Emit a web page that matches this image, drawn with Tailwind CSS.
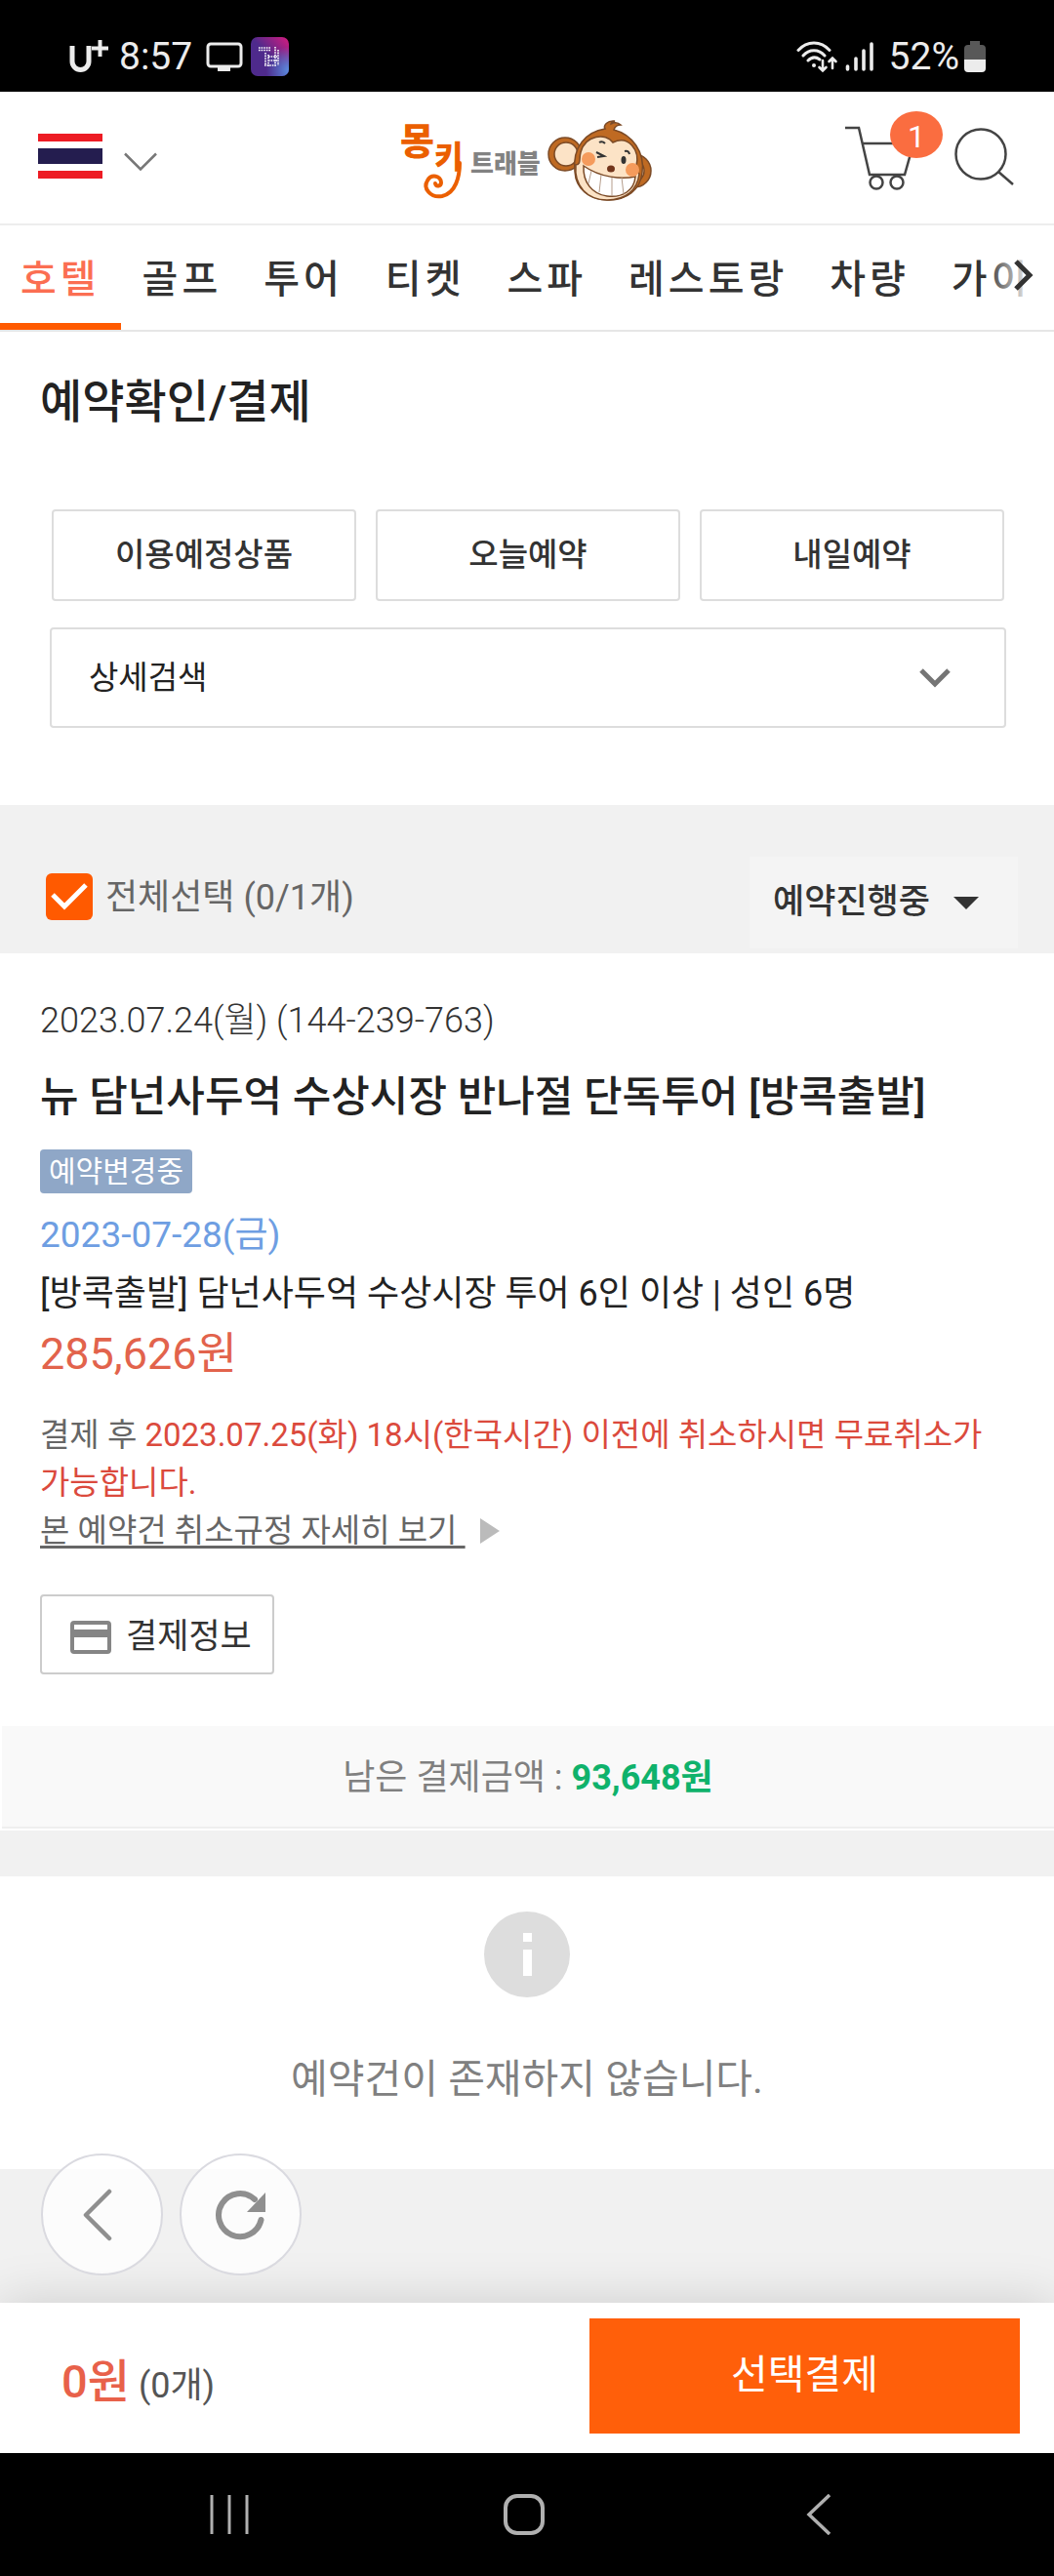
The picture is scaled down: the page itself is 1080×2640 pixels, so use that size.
<!DOCTYPE html>
<html lang="ko">
<head>
<meta charset="utf-8">
<meta name="viewport" content="width=device-width, initial-scale=1">
<title>예약확인/결제 - 몽키트래블</title>
<script src="https://cdn.jsdelivr.net/npm/@tailwindcss/browser@4"></script>
</head>
<body class="flex min-h-screen flex-col overflow-x-hidden bg-[#f1f1f1] font-['Roboto','Noto_Sans_CJK_KR',sans-serif] text-[#222]">

<!-- Phone status bar -->
<div class="flex h-[94px] shrink-0 items-start justify-between bg-black pt-[38px] pr-[70px] pl-[70px] text-[#ececec]">
  <div class="flex h-10 items-center">
    <svg class="mr-[10px] h-[36px] w-[42px]" viewBox="0 0 42 36" fill="none" stroke="#ececec"><path stroke-width="5" d="M4 7v16a8.500 8.500 0 0 0 17 0V7"/><path stroke-width="4" d="M24 9.500h17M32.500 1v17"/></svg>
    <span class="text-[39px] leading-[42px]">8:57</span>
    <svg class="ml-[14px] h-[32px] w-[38px]" viewBox="0 0 38 32" fill="none" stroke="#ececec"><rect x="2" y="3" width="34" height="23" rx="3" stroke-width="3"/><path stroke="none" fill="#ececec" d="M12 26h13v5H12z"/></svg>
    <svg class="ml-[8px] size-10" viewBox="0 0 40 40"><defs><linearGradient id="app" x1="0" y1="1" x2="1" y2="0"><stop offset=".5" stop-color="#4e2a8c"/><stop offset="1" stop-color="#d81b80"/></linearGradient><radialGradient id="glow" cx="1" cy=".85" r=".6"><stop offset="0" stop-color="#5a8de0"/><stop offset="1" stop-color="#5a8de0" stop-opacity="0"/></radialGradient></defs><rect width="39" height="40" rx="7" fill="url(#app)"/><rect width="39" height="40" rx="7" fill="url(#glow)"/><path d="M8 11h12M8 13.500h12M15 16v12M18 18v12M25 10v20M28 13v16M18 20h9M18 24h9M14 29h12" stroke="#fff" stroke-width="1.600" stroke-dasharray="1.600 1" fill="none"/></svg>
  </div>
  <div class="flex h-10 items-center">
    <svg class="h-[34px] w-[44px]" viewBox="0 0 44 34" fill="none" stroke="#ececec" stroke-width="3" stroke-linecap="round"><path d="M2 10.500c9-10 23-10 32 0M7 16c6-7 16-7 22 0M12 21c4-4 8-4 12-1"/><circle cx="18" cy="26" r="2" fill="#ececec" stroke="none"/><path stroke-width="2.600" d="M27 21v10M23.500 28l3.500 3.500L30.500 28M37 29V19M33.500 22l3.500-3.500L40.500 22"/></svg>
    <svg class="ml-[6px] h-[32px] w-[30px]" viewBox="0 0 30 32" stroke="#ececec" stroke-width="3.600" stroke-linecap="round"><path d="M2.500 26v3M11 18v11M19 10v19M27 3v26"/></svg>
    <span class="ml-[15px] text-[39px] leading-[42px]">52%</span>
    <svg class="ml-[5px] h-[34px] w-[22px]" viewBox="0 0 22 34"><path d="M6 1h10v4h2a4 4 0 0 1 4 4v11H0V9a4 4 0 0 1 4-4h2z" fill="#585858"/><path d="M0 20h22v9a4 4 0 0 1-4 4H4a4 4 0 0 1-4-4z" fill="#ececec"/></svg>
  </div>
</div>

<!-- Site header -->
<header class="shrink-0 bg-white">
  <div class="grid h-[137px] grid-cols-[1fr_auto_1fr] items-center border-b-2 border-[#ededed]">
    <button class="mb-[4px] flex items-center justify-self-start pl-[39px]" aria-label="국가 선택">
      <svg class="h-[46px] w-[66px]" viewBox="0 0 66 46"><path fill="#ed1c24" d="M0 0h66v8H0zM0 38h66v8H0z"/><path fill="#241d4f" d="M0 15h66v16H0z"/></svg>
      <svg class="mt-[12px] ml-[22px] h-[20px] w-[34px]" viewBox="0 0 34 20" fill="none" stroke="#777" stroke-width="2.500"><path d="M1 1.500l16 16 16-16"/></svg>
    </button>
    <a href="#" class="flex h-full items-center" aria-label="몽키트래블">
      <svg class="h-[114px] w-[260px] pb-[4px] font-['Noto_Sans_CJK_KR',sans-serif] font-black" viewBox="0 0 260 110">
        <text x="0" y="53" font-size="38" fill="#eb5f00">몽</text>
        <text x="35" y="67" font-size="32" fill="#eb5f00">키</text>
        <path d="M61 62c0 14-4 31-18 34-12 2-20-8-15-16 4-7 14-5 14 2 0 4-5 5-6 1" fill="none" stroke="#eb5f00" stroke-width="4" stroke-linecap="round"/>
        <text x="72" y="72" font-size="26" fill="#828282">트래블</text>
        <g stroke="#7b4a26" stroke-width="1.500">
          <circle cx="169" cy="53" r="17" fill="#bf6a22"/><circle cx="170" cy="53" r="12" fill="#fce3c6"/>
          <circle cx="240" cy="70" r="17" fill="#bf6a22"/><circle cx="238" cy="70" r="12" fill="#fce3c6"/>
          <path d="M210 27c-2-3 2-9 10-8-3 1-4 2-4 3 4-2 8-1 10 1-4 0-6 2-7 5 19 5 32 23 29 44-2 18-16 28-34 28-20 0-34-11-35-29-3-26 12-41 31-44z" fill="#bf6a22"/>
          <path d="M218 41c-7-10-28-8-33 10-2 7 1 12-5 13-2 22 12 36 32 36 19 0 31-10 33-27-3-2-4-3-3-8 4-16-8-32-24-24z" fill="#fce3c6"/>
          <path d="M188 65c17 12 39 14 53 11-1 14-13 22-29 20-15-2-25-14-24-31z" fill="#fff"/>
        </g>
        <path d="M196 70l-3 13M206 74l-2 18M217 77v19M227 77l2 17" stroke="#b59d8b" fill="none"/>
        <circle cx="193" cy="58" r="7" fill="#f59b5c"/><circle cx="238" cy="69" r="7" fill="#f59b5c"/>
        <ellipse cx="216" cy="68" rx="4" ry="3.500" fill="#72351b"/>
        <path d="M201 51l8 4-7 1M204 41q3-2 6 1M230 50q4-1 5 3" stroke="#333" stroke-width="2" fill="none"/><ellipse cx="229" cy="59" rx="2.500" ry="4" fill="#333"/>
      </svg>
    </a>
    <div class="mb-[4px] flex items-center justify-self-end pr-[41px]">
      <button class="relative" aria-label="장바구니 1">
        <svg class="h-[70px] w-[72px]" viewBox="0 0 72 70" fill="none" stroke="#444" stroke-width="2.500"><path d="M0 6h14l11 48h36l9-32H18"/><circle cx="32" cy="62" r="6.500"/><circle cx="53" cy="62" r="6.500"/></svg>
        <span class="absolute -top-[11px] left-[46px] flex h-[48px] w-[54px] items-center justify-center rounded-[50%] bg-[#fa6d40] pt-1 text-[32px] leading-none text-white">1</span>
      </button>
      <button class="ml-[39px]" aria-label="검색">
        <svg class="h-[60px] w-[62px]" viewBox="0 0 62 60" fill="none" stroke="#444" stroke-width="2.500"><circle cx="28" cy="28" r="25.500"/><path d="M46 46l15 13"/></svg>
      </button>
    </div>
  </div>
  <div class="relative">
    <nav class="flex h-[109px] gap-px overflow-hidden border-b-2 border-[#e6e6e6] text-[40px] leading-[102px] font-medium tracking-[4px] whitespace-nowrap text-[#333]">
      <a href="#" class="border-b-[7px] border-[#ff5a00] px-[21px] pt-[5px] text-[#fb6e52]">호텔</a>
      <a href="#" class="px-[21px] pt-[5px]">골프</a>
      <a href="#" class="px-[21px] pt-[5px]">투어</a>
      <a href="#" class="px-[21px] pt-[5px]">티켓</a>
      <a href="#" class="px-[21px] pt-[5px]">스파</a>
      <a href="#" class="px-[21px] pt-[5px]">레스토랑</a>
      <a href="#" class="px-[21px] pt-[5px]">차량</a>
      <a href="#" class="px-[21px] pt-[5px]">가이드</a>
    </nav>
    <button class="absolute top-0 right-0 flex h-[107px] w-[70px] items-center justify-end bg-linear-to-r from-white/0 via-white/80 via-55% to-white to-65% pr-[20px] pb-[6px]" aria-label="다음 메뉴">
      <svg class="h-[34px] w-[22px]" viewBox="0 0 22 34" fill="none" stroke="#333" stroke-width="5"><path d="M3 3l14 14L3 31"/></svg>
    </button>
  </div>
</header>

<main class="flex-1">
  <section class="bg-white px-[41px] pt-[42px] pb-[79px]">
    <h1 class="text-[47px] leading-[60px] font-medium">예약확인/결제</h1>
    <div class="mt-[80px] pr-[8px] pl-[10px]">
      <div class="grid grid-cols-3 gap-[20px] px-[2px] text-[33px] font-medium text-[#333]">
        <button class="h-[94px] rounded-sm border-2 border-[#ddd]">이용예정상품</button>
        <button class="h-[94px] rounded-sm border-2 border-[#ddd]">오늘예약</button>
        <button class="h-[94px] rounded-sm border-2 border-[#ddd]">내일예약</button>
      </div>
      <button class="mt-[27px] flex h-[103px] w-full items-center justify-between rounded-sm border-2 border-[#ddd] pr-[54px] pl-[38px] text-[33px]">
        상세검색
        <svg class="h-[22px] w-[34px]" viewBox="0 0 34 22" fill="none" stroke="#757575" stroke-width="5"><path d="M3 3l14 14L31 3"/></svg>
      </button>
    </div>
  </section>

  <div class="flex items-end justify-between pt-[53px] pr-[37px] pb-[5px] pl-[47px]">
    <label class="mb-[22px] flex items-center text-[36px] leading-[60px] text-[#666]">
      <span class="relative mr-[13px] flex size-[48px]">
        <input type="checkbox" checked class="size-[48px] appearance-none rounded-md bg-[#ff5a00]">
        <svg class="pointer-events-none absolute inset-0" viewBox="0 0 48 48" fill="none" stroke="#fff" stroke-width="5"><path d="M7 22l12 12L41 12"/></svg>
      </span>
      <span class="pt-[2px]">전체선택 (0/1개)</span>
    </label>
    <div class="relative">
      <select class="h-[94px] w-[275px] appearance-none bg-[#f4f4f4] pl-[24px] text-[35px] font-medium text-[#333]" aria-label="예약 상태">
        <option>예약진행중</option>
      </select>
      <svg class="pointer-events-none absolute top-[41px] right-[40px] h-[13px] w-[26px]" viewBox="0 0 26 13" fill="#333"><path d="M0 0h26L13 13z"/></svg>
    </div>
  </div>

  <article class="bg-white pb-[2px]">
    <div class="px-[41px] pt-[44px] pb-[53px]">
      <p class="text-[36px] leading-[50px] font-light text-[#333]">2023.07.24(월) (144-239-763)</p>
      <h2 class="mt-[21px] text-[43px] leading-[64px] font-medium">뉴 담넌사두억 수상시장 반나절 단독투어 [방콕출발]</h2>
      <p class="mt-[22px] w-fit rounded-sm bg-[#8fa7c7] px-[9px] text-[30px] leading-[45px] text-white">예약변경중</p>
      <p class="mt-[13px] text-[37px] leading-[60px] text-[#6e9ee2]">2023-07-28(금)</p>
      <p class="text-[36px] leading-[60px]">[방콕출발] 담넌사두억 수상시장 투어 6인 이상 | 성인 6명</p>
      <p class="text-[45px] leading-[64px] text-[#e2634c]">285,626원</p>
      <p class="mt-[26px] text-[33px] leading-[49px] break-keep text-[#666]">결제 후 <span class="text-[#db4a3d]">2023.07.25(화) 18시(한국시간) 이전에 취소하시면 무료취소가 가능합니다.</span></p>
      <a href="#" class="flex items-center text-[33px] leading-[49px] text-[#666]"><span class="whitespace-pre underline decoration-[3px] underline-offset-[4px]">본 예약건 취소규정 자세히 보기 </span><svg class="ml-[15px] h-[26px] w-[20px]" viewBox="0 0 20 26" fill="#bbb"><path d="M0 0l20 13L0 26z"/></svg></a>
      <button class="mt-[41px] flex h-[82px] items-center gap-[15px] rounded-sm border-2 border-[#ccc] pt-[6px] pr-[21px] pl-[29px] text-[35px] text-[#333]">
        <svg class="h-[34px] w-[42px]" viewBox="0 0 42 34"><rect x="2" y="2" width="38" height="30" rx="2" fill="none" stroke="#858585" stroke-width="4"/><path fill="#858585" d="M2 9h38v8H2z"/></svg>
        결제정보
      </button>
    </div>
    <p class="ml-[2px] border-b-2 border-[#efefef] bg-[#f9f9f9] pt-[4px] text-center text-[36px] leading-[99px] text-[#808080]">남은 결제금액 : <strong class="font-bold text-[#0fb26b]">93,648원</strong></p>
  </article>

  <section class="mt-[47px] flex flex-col items-center bg-white pt-[36px] pb-[62px]">
    <svg class="size-[88px]" viewBox="0 0 88 88"><circle cx="44" cy="44" r="44" fill="#ddd"/><path fill="#fff" d="M40 22h9v9h-9zM40 39h9v27h-9z"/></svg>
    <p class="mt-[54px] text-[41px] leading-[60px] text-[#808080]">예약건이 존재하지 않습니다.</p>
  </section>
</main>

<!-- Floating page controls and payment bar -->
<div class="sticky bottom-0 shrink-0">
  <div class="-mt-[16px] flex gap-[17px] px-[42px] pb-[28px]">
    <button class="flex size-[125px] items-center justify-center rounded-full border-2 border-[#dadae0] bg-white/80" aria-label="뒤로">
      <svg class="mr-[10px] h-[54px] w-[30px]" viewBox="0 0 30 54" fill="none" stroke="#8f8f8f" stroke-width="4.500" stroke-linecap="round" stroke-linejoin="round"><path d="M27 3L3 27l24 24"/></svg>
    </button>
    <button class="flex size-[125px] items-center justify-center rounded-full border-2 border-[#dadae0] bg-white/80" aria-label="새로고침">
      <svg class="size-[54px]" viewBox="0 0 54 54" fill="none"><path d="M47.500 32A22 22 0 1 1 41 11" stroke="#8f8f8f" stroke-width="6" stroke-linecap="round"/><path d="M52 4v20H33z" fill="#8f8f8f"/></svg>
    </button>
  </div>
  <div class="flex h-[154px] items-start justify-between bg-white pt-[16px] pr-[35px] pl-[63px] shadow-[0_0_50px_rgba(0,0,0,0.15)]">
    <p class="pt-[33px] text-[36px] leading-[64px] text-[#555]"><strong class="text-[47px] font-medium text-[#e8614a]">0원</strong> (0개)</p>
    <button class="h-[118px] w-[441px] bg-[#ff5f0a] text-[41px] text-white">선택결제</button>
  </div>
  <div class="flex h-[126px] items-center bg-black pr-[90px] pl-[84px]">
    <button class="flex flex-1 justify-center" aria-label="최근 앱"><svg class="h-[42px] w-[40px]" viewBox="0 0 40 42" stroke="#b0b0b0" stroke-width="3"><path d="M2 1v40M20 1v40M38 1v40"/></svg></button>
    <button class="flex flex-1 justify-center" aria-label="홈"><svg class="h-[42px] w-[42px]" viewBox="0 0 42 42" fill="none" stroke="#b0b0b0" stroke-width="4"><rect x="2" y="2" width="38" height="38" rx="12"/></svg></button>
    <button class="flex flex-1 justify-center" aria-label="이전"><svg class="h-[42px] w-[26px]" viewBox="0 0 26 42" fill="none" stroke="#b0b0b0" stroke-width="3.500"><path d="M24 1L3 21l21 20"/></svg></button>
  </div>
</div>
</body>
</html>
